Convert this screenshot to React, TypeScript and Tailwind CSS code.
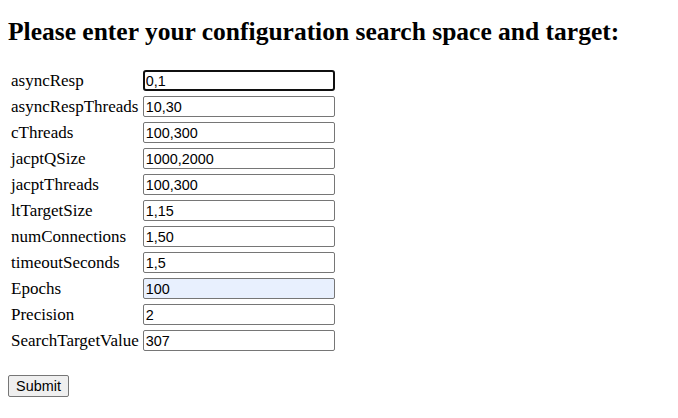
const fields = [
  { label: "asyncResp", value: "0,1", focused: true },
  { label: "asyncRespThreads", value: "10,30" },
  { label: "cThreads", value: "100,300" },
  { label: "jacptQSize", value: "1000,2000" },
  { label: "jacptThreads", value: "100,300" },
  { label: "ltTargetSize", value: "1,15" },
  { label: "numConnections", value: "1,50" },
  { label: "timeoutSeconds", value: "1,5" },
  { label: "Epochs", value: "100", filled: true },
  { label: "Precision", value: "2" },
  { label: "SearchTargetValue", value: "307" },
]

export default function App() {
  return (
    <div className="min-h-[418px] bg-white px-2 text-black font-['Liberation_Serif',serif]">
      <h2 className="pt-[18px] text-[25.5px] font-bold leading-[27px]">
        Please enter your configuration search space and target:
      </h2>

      <form className="mt-[21px]" onSubmit={(e) => e.preventDefault()}>
        <div className="inline-grid grid-cols-[auto_194px] gap-x-[2px] gap-y-[2px] p-[2px]">
          {fields.map((f) => (
            <div key={f.label} className="contents">
              <div className="flex h-[24px] items-center px-[1px] pt-[1px] text-[17px]">
                {f.label}
              </div>
              <div className="flex h-[24px] items-center px-[1px]">
                <input
                  type="text"
                  defaultValue={f.value}
                  className={
                    f.focused
                      ? "h-[21px] w-[192px] rounded-[3px] border-2 border-[#101010] bg-white px-[1px] pt-[1px] text-[14.4px] leading-[17px] text-black outline-none font-['Liberation_Sans',Arial,sans-serif]"
                      : f.filled
                        ? "h-[21px] w-[192px] rounded-[2px] border border-[#767676] bg-[#e8f0fe] px-[2px] pt-[2px] text-[14.4px] leading-[17px] text-black outline-none font-['Liberation_Sans',Arial,sans-serif]"
                        : "h-[21px] w-[192px] rounded-[2px] border border-[#767676] bg-white px-[2px] pt-[2px] text-[14.4px] leading-[17px] text-black outline-none font-['Liberation_Sans',Arial,sans-serif]"
                  }
                />
              </div>
            </div>
          ))}
        </div>

        <div className="mt-[20px]">
          <button
            type="submit"
            className="h-[22px] w-[61px] rounded-[2px] border border-[#767676] bg-[#efefef] pt-[1px] text-[14.4px] leading-[17px] text-black font-['Liberation_Sans',Arial,sans-serif]"
          >
            Submit
          </button>
        </div>
      </form>
    </div>
  )
}
